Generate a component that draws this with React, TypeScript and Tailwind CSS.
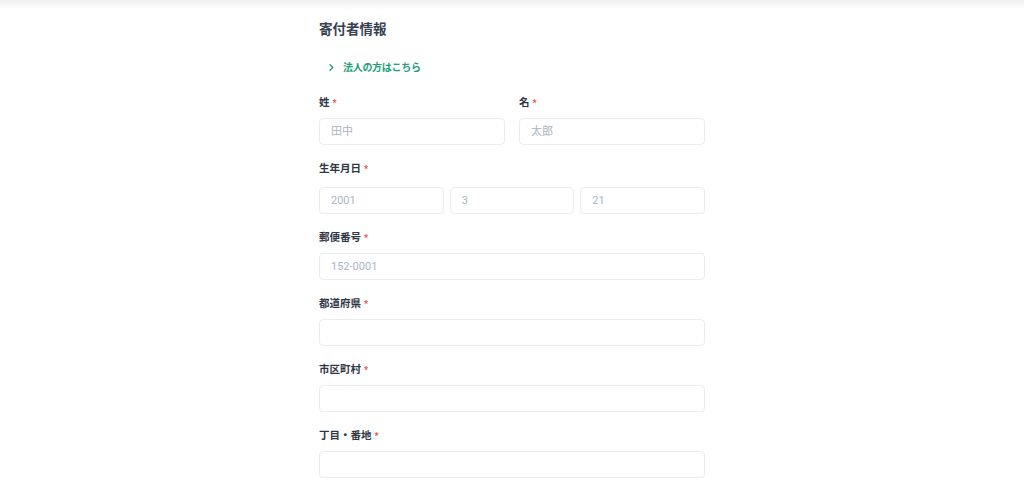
import { ReactNode } from "react";

type FieldProps = {
  label: string;
  labelGap?: string;
  children: ReactNode;
};

const Field = ({ label, labelGap = "mb-[6px]", children }: FieldProps) => {
  return (
    <div className="flex flex-col">
      <label className={`flex items-center h-[18px] text-[10.5px] font-bold text-[#2f3746] ${labelGap}`}>
        {label}
        <span className="ml-[3px] text-[9px] text-[#ef4444] leading-none">*</span>
      </label>
      {children}
    </div>
  );
};

const Input = ({ placeholder }: { placeholder?: string }) => {
  return (
    <input
      type="text"
      placeholder={placeholder}
      className="w-full h-[27px] px-[11px] rounded-[4px] border border-[#e9ecf1] bg-white text-[11px] text-[#374151] placeholder:text-[#a9b4c4] outline-none"
    />
  );
};

const App = () => {
  return (
    <div className="min-h-[491px] bg-white" style={{ fontFamily: "Roboto, 'Noto Sans CJK JP', sans-serif" }}>
      <div className="h-[10px] bg-gradient-to-b from-[#efefef] to-white" />
      <div className="w-[386px] mx-auto">
        <h2 className="mt-[9px] h-[20px] leading-[20px] text-[13.5px] font-bold text-[#374151]">寄付者情報</h2>
        <a href="#" className="mt-[20px] ml-[10px] flex items-center gap-[9px] h-[16px] text-[10px] font-bold text-[#1d9f78]">
          <svg width="5" height="7" viewBox="0 0 5 7" fill="none">
            <path d="M1 0.8 L3.8 3.5 L1 6.2" stroke="currentColor" strokeWidth="1.3" strokeLinecap="round" strokeLinejoin="round" />
          </svg>
          <span className="tracking-[-0.3px]">法人の方はこちら</span>
        </a>

        <div className="mt-[19px] flex flex-col gap-[15px]">
          <div className="grid grid-cols-2 gap-[14px]">
            <Field label="姓">
              <Input placeholder="田中" />
            </Field>
            <Field label="名">
              <Input placeholder="太郎" />
            </Field>
          </div>

          <Field label="生年月日" labelGap="mb-[9px]">
            <div className="grid grid-cols-3 gap-[6px]">
              <Input placeholder="2001" />
              <Input placeholder="3" />
              <Input placeholder="21" />
            </div>
          </Field>

          <Field label="郵便番号">
            <Input placeholder="152-0001" />
          </Field>

          <Field label="都道府県">
            <Input />
          </Field>

          <Field label="市区町村">
            <Input />
          </Field>

          <Field label="丁目・番地">
            <Input />
          </Field>
        </div>
      </div>
    </div>
  );
};

export default App;
